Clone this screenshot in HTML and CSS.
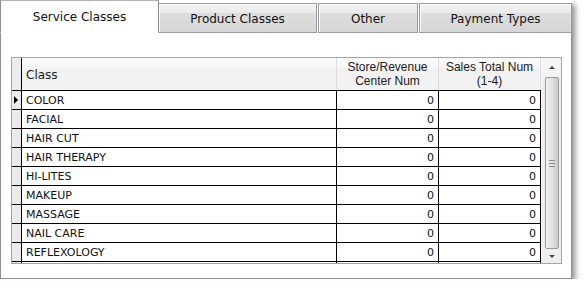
FILE: index.html
```html
<!DOCTYPE html>
<html>
	<head>
		<meta charset="utf-8">
		<title>Classes</title>
		<link rel="stylesheet" href="styles.css">
	</head>
	<body>
		<div class="window">
			<div class="tabs">
				<div class="tab active">Service Classes</div>
				<div class="tab tab-product">Product Classes</div>
				<div class="tab tab-other">Other</div>
				<div class="tab tab-payment">Payment Types</div>
			</div>
			<div class="panel">
				<div class="grid">
					<div class="grid-body">
						<div class="row head">
							<div class="cell rh"></div>
							<div class="cell c-class">Class</div>
							<div class="cell c-num">Store/Revenue<br>Center Num</div>
							<div class="cell c-num">Sales Total Num<br>(1-4)</div>
						</div>
						<div class="row">
							<div class="cell rh"><span class="marker"></span></div>
							<div class="cell c-class">COLOR</div>
							<div class="cell c-num">0</div>
							<div class="cell c-num">0</div>
						</div>
						<div class="row">
							<div class="cell rh"></div>
							<div class="cell c-class">FACIAL</div>
							<div class="cell c-num">0</div>
							<div class="cell c-num">0</div>
						</div>
						<div class="row">
							<div class="cell rh"></div>
							<div class="cell c-class">HAIR CUT</div>
							<div class="cell c-num">0</div>
							<div class="cell c-num">0</div>
						</div>
						<div class="row">
							<div class="cell rh"></div>
							<div class="cell c-class">HAIR THERAPY</div>
							<div class="cell c-num">0</div>
							<div class="cell c-num">0</div>
						</div>
						<div class="row">
							<div class="cell rh"></div>
							<div class="cell c-class">HI-LITES</div>
							<div class="cell c-num">0</div>
							<div class="cell c-num">0</div>
						</div>
						<div class="row">
							<div class="cell rh"></div>
							<div class="cell c-class">MAKEUP</div>
							<div class="cell c-num">0</div>
							<div class="cell c-num">0</div>
						</div>
						<div class="row">
							<div class="cell rh"></div>
							<div class="cell c-class">MASSAGE</div>
							<div class="cell c-num">0</div>
							<div class="cell c-num">0</div>
						</div>
						<div class="row">
							<div class="cell rh"></div>
							<div class="cell c-class">NAIL CARE</div>
							<div class="cell c-num">0</div>
							<div class="cell c-num">0</div>
						</div>
						<div class="row">
							<div class="cell rh"></div>
							<div class="cell c-class">REFLEXOLOGY</div>
							<div class="cell c-num">0</div>
							<div class="cell c-num">0</div>
						</div>
						<div class="row">
							<div class="cell rh"></div>
							<div class="cell c-class"></div>
							<div class="cell c-num"></div>
							<div class="cell c-num"></div>
						</div>
					</div>
					<div class="scrollbar">
						<div class="sb-btn"><span class="arrow-up"></span></div>
						<div class="sb-track">
							<div class="sb-thumb"><span class="grip"></span></div>
						</div>
						<div class="sb-btn sb-down"><span class="arrow-down"></span></div>
					</div>
				</div>
			</div>
		</div>
	</body>
</html>
```

FILE: styles.css
```css
body {
	margin: 0;
	background: #ffffff;
	font-family: "DejaVu Sans", sans-serif;
	color: #000000;
}

.window {
	width: 572px;
	height: 279px;
	display: flex;
	flex-direction: column;
	box-shadow: 3px 4px 6px rgba(0, 0, 0, 0.45);
}

.tabs {
	display: flex;
	align-items: flex-end;
	height: 33px;
}

.tab {
	box-sizing: border-box;
	height: 30px;
	border: solid 1px #9b9ba3;
	box-shadow: inset 1px 1px 0 #fafafa;
	background: linear-gradient(#f3f3f3, #ebebeb 30%, #dedede 32%, #d6d6d6);
	font-size: 12px;
	color: #111111;
	display: flex;
	align-items: center;
	justify-content: center;
	padding-top: 1px;
}

.tab.active {
	width: 159px;
	height: 33px;
	background: #ffffff;
	border-color: #b4b4b8 #8e8e96 transparent #8e8e96;
	box-shadow: none;
	padding-top: 0;
}

.tab-product {
	width: 158px;
	border-left: none;
}

.tab-other {
	width: 100px;
	margin-left: 1px;
}

.tab-payment {
	width: 153px;
	margin-left: 1px;
}

.panel {
	flex: 1;
	border: solid 1px #8e8e96;
	border-top: none;
	padding: 24px 0 0 10px;
	background: #ffffff;
}

.grid {
	width: 551px;
	height: 207px;
	box-sizing: border-box;
	border: solid 1px #a4a4a4;
	display: flex;
	overflow: hidden;
}

.grid-body {
	width: 529px;
	overflow: hidden;
}

.row {
	display: flex;
	height: 19px;
	box-sizing: border-box;
	border-bottom: solid 1px #000000;
	font-size: 11px;
	color: #111111;
}

.row.head {
	height: 33px;
	background: linear-gradient(#fafafa, #f7f7f7 30%, #f1f1f1 32%, #f3f3f3);
	font-family: "Liberation Sans", Arial, sans-serif;
	font-size: 12px;
	color: #202020;
}

.cell {
	box-sizing: border-box;
	border-right: solid 1px #000000;
	display: flex;
	align-items: center;
	white-space: nowrap;
}

.rh {
	width: 10px;
	background: #ebebeb;
}

.c-class {
	width: 315px;
	padding-left: 4px;
}

.c-num {
	width: 102px;
	justify-content: flex-end;
	padding-right: 4px;
}

.head .cell {
	border-right-color: #dcdcdc;
}

.head .rh {
	border-right-color: #000000;
	background: #ececec;
}

.head .c-class {
	font-family: "DejaVu Sans", sans-serif;
	padding-top: 1px;
}

.head .c-num {
	justify-content: center;
	text-align: center;
	padding: 0;
	line-height: 14px;
}

.marker {
	width: 0;
	height: 0;
	margin-left: 2px;
	border-left: solid 4px #000000;
	border-top: solid 4px transparent;
	border-bottom: solid 4px transparent;
}

.scrollbar {
	flex: 1;
	display: flex;
	flex-direction: column;
	background: #efefef;
	border-left: solid 1px #f8f8f8;
}

.sb-btn {
	height: 19px;
	display: flex;
	align-items: center;
	justify-content: center;
	background: #f4f4f4;
}

.sb-down {
	height: 14px;
	background: #efefef;
}

.arrow-up {
	width: 0;
	height: 0;
	border-bottom: solid 3px #444444;
	border-left: solid 3px transparent;
	border-right: solid 3px transparent;
}

.arrow-down {
	width: 0;
	height: 0;
	border-top: solid 3px #444444;
	border-left: solid 3px transparent;
	border-right: solid 3px transparent;
}

.sb-track {
	flex: 1;
	display: flex;
	padding: 0 2px 0 3px;
}

.sb-thumb {
	flex: 1;
	border: solid 1px #9a9aa0;
	border-radius: 2px;
	background: linear-gradient(to right, #f2f2f2, #e2e2e2 50%, #c9c9cc);
	display: flex;
	align-items: center;
	justify-content: center;
}

.grip {
	width: 6px;
	height: 5px;
	border-top: solid 1px #8c8c8c;
	border-bottom: solid 1px #8c8c8c;
	position: relative;
}

.grip::after {
	content: "";
	position: absolute;
	left: 0;
	right: 0;
	top: 2px;
	border-top: solid 1px #8c8c8c;
}
```
